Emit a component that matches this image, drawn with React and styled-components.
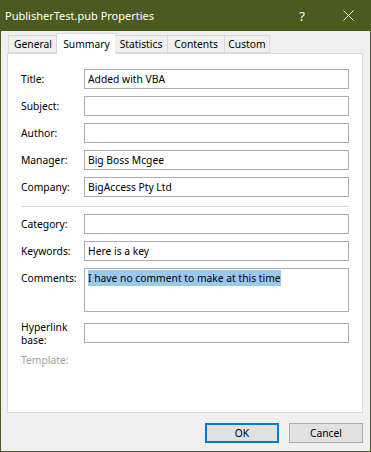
import React from 'react'
import styled, { createGlobalStyle } from 'styled-components'

const GlobalStyle = createGlobalStyle`
  html, body {
    margin: 0;
    padding: 0;
    background: #ffffff;
  }
  * {
    box-sizing: border-box;
  }
`

const FONT = `"Segoe UI", "Noto Sans", sans-serif`

const Window = styled.div`
  width: 371px;
  height: 452px;
  display: flex;
  flex-direction: column;
  background: #f0f0f0;
  border: 1px solid #4b5a1f;
  border-top: none;
  font-family: ${FONT};
  font-size: 10.3px;
  color: #000;
`

const TitleBar = styled.div`
  height: 31px;
  margin: 0 -1px;
  background: #4b5a1f;
  color: #fff;
  display: flex;
  align-items: center;
  flex: none;
`

const Caption = styled.div`
  flex: 1;
  padding-left: 5px;
  font-size: 11px;
  white-space: nowrap;
`

const CaptionButton = styled.div`
  width: 46px;
  height: 31px;
  display: flex;
  align-items: center;
  justify-content: center;
  font-size: 13px;
`

const Body = styled.div`
  flex: 1;
  display: flex;
  flex-direction: column;
  padding: 2px 7px 0 6px;
`

const TabStrip = styled.div`
  display: flex;
  align-items: flex-end;
  height: 20px;
  padding-left: 1px;
  position: relative;
  z-index: 1;
`

const Tab = styled.div`
  height: ${p => (p.$active ? '21px' : '18px')};
  margin: ${p => (p.$active ? '0 -2px -1px -2px' : '0')};
  padding: 0 ${p => (p.$active ? '8px' : '6px')};
  display: flex;
  align-items: center;
  justify-content: center;
  width: ${p => p.$w}px;
  background: ${p => (p.$active ? '#ffffff' : '#f0f0f0')};
  border: 1px solid #d9d9d9;
  border-bottom: ${p => (p.$active ? 'none' : '1px solid #d9d9d9')};
  border-left: ${p => (p.$first || p.$active ? '1px solid #d9d9d9' : 'none')};
  white-space: nowrap;
  position: relative;
  padding-bottom: ${p => (p.$active ? '1px' : '0')};
`

const Panel = styled.div`
  height: 360px;
  background: #ffffff;
  border: 1px solid #d9d9d9;
  padding: 15px 13px 0 13px;
  display: flex;
  flex-direction: column;
  flex: none;
`

const Field = styled.div`
  display: flex;
  min-height: 20px;
  align-items: ${p => (p.$top ? 'flex-start' : 'center')};
  margin-bottom: ${p => (p.$gap !== undefined ? p.$gap : 7)}px;
  margin-top: ${p => p.$mt || 0}px;
`

const Label = styled.div`
  width: 63px;
  flex: none;
  line-height: 13px;
  color: ${p => (p.$disabled ? '#a0a0a0' : '#000')};
  margin-top: ${p => p.$offset || 0}px;
`

const Input = styled.div`
  flex: 1;
  height: ${p => p.$h || 20}px;
  border: 1px solid #adadad;
  background: #fff;
  padding: 2px 3px;
  line-height: 14px;
  white-space: nowrap;
  overflow: hidden;
`

const Selected = styled.span`
  background: #99c9ef;
  padding: 1px 0 1px;
`

const Separator = styled.div`
  height: 1px;
  background: #dadada;
  margin: 2px 0 7px 0;
`

const Footer = styled.div`
  display: flex;
  justify-content: flex-end;
  gap: 10px;
  padding-top: 10px;
`

const Button = styled.div`
  width: 74px;
  height: 20px;
  display: flex;
  align-items: center;
  justify-content: center;
  background: #e1e1e1;
  border: ${p => (p.$default ? '2px solid #0078d7' : '1px solid #adadad')};
`

const tabs = [
  { name: 'General', w: 50 },
  { name: 'Summary', w: 61, active: true },
  { name: 'Statistics', w: 53 },
  { name: 'Contents', w: 57 },
  { name: 'Custom', w: 45 },
]

export default function App() {
  return (
    <>
      <GlobalStyle />
      <Window>
        <TitleBar>
          <Caption>PublisherTest.pub Properties</Caption>
          <CaptionButton>?</CaptionButton>
          <CaptionButton>
            <svg width="11" height="11" viewBox="0 0 11 11">
              <path d="M0.5 0.5 L10.5 10.5 M10.5 0.5 L0.5 10.5" stroke="#fff" strokeWidth="1" />
            </svg>
          </CaptionButton>
        </TitleBar>
        <Body>
          <TabStrip>
            {tabs.map((t, i) => (
              <Tab key={t.name} $w={t.w} $active={t.active} $first={i === 0}>
                {t.name}
              </Tab>
            ))}
          </TabStrip>
          <Panel>
            <Field><Label>Title:</Label><Input>Added with VBA</Input></Field>
            <Field><Label>Subject:</Label><Input /></Field>
            <Field><Label>Author:</Label><Input /></Field>
            <Field><Label>Manager:</Label><Input>Big Boss Mcgee</Input></Field>
            <Field><Label>Company:</Label><Input>BigAccess Pty Ltd</Input></Field>
            <Separator />
            <Field><Label>Category:</Label><Input /></Field>
            <Field><Label>Keywords:</Label><Input>Here is a key</Input></Field>
            <Field $top>
              <Label $offset={4}>Comments:</Label>
              <Input $h={44}><Selected>I have no comment to make at this time</Selected></Input>
            </Field>
            <Field $top $mt={4} $gap={3}>
              <Label $offset={-2}>Hyperlink<br />base:</Label>
              <Input />
            </Field>
            <Field>
              <Label $disabled>Template:</Label>
            </Field>
          </Panel>
          <Footer>
            <Button $default>OK</Button>
            <Button>Cancel</Button>
          </Footer>
        </Body>
      </Window>
    </>
  )
}
